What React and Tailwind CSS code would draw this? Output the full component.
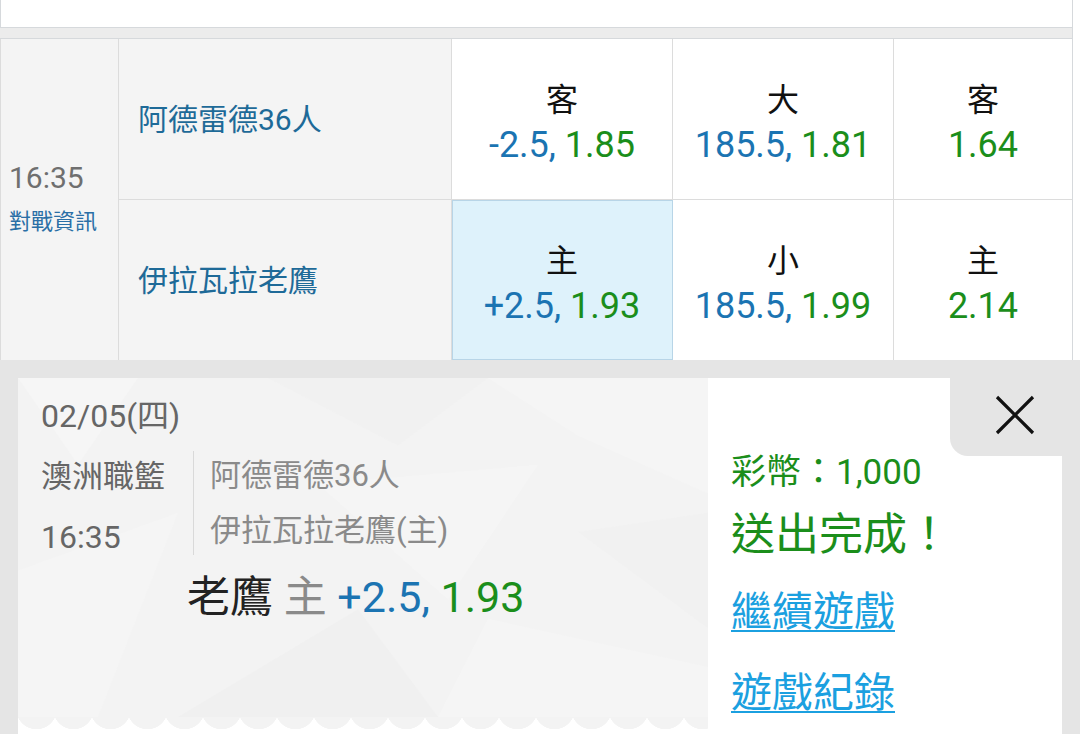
import React from "react";

const FONT = { fontFamily: "Roboto, 'Noto Sans CJK TC', 'Noto Sans', sans-serif" };

// one odds cell: label on top, line + price below
const OddsCell = ({ label, line, price, selected, last }) => (
  <div
    className={
      "flex flex-col items-center justify-center pt-[8px] border-[#dcdcdc] " +
      (last ? "" : "border-r ") +
      (selected ? "bg-[#def2fb] outline outline-1 outline-[#b8d5e7] -outline-offset-1" : "bg-white")
    }
  >
    <div className="text-[32px] leading-[44px] text-[#111]">{label}</div>
    <div className="text-[36px] leading-[46px] whitespace-nowrap">
      {line && <span className="text-[#1b74b2]">{line}, </span>}
      <span className="text-[#1b8e1b]">{price}</span>
    </div>
  </div>
);

const PolyBackground = () => (
  <svg className="absolute inset-0 w-full h-full" viewBox="0 0 690 352" preserveAspectRatio="none">
    <rect width="690" height="352" fill="#f3f3f3" />
    <polygon points="0,0 120,0 60,90" fill="#f6f6f6" />
    <polygon points="250,0 470,0 380,70" fill="#f0f0f0" opacity="0.6" />
    <polygon points="470,0 690,0 690,120 560,60" fill="#f5f5f5" />
    <polygon points="0,200 160,140 80,352 0,352" fill="#f5f5f5" />
    <polygon points="160,352 340,240 420,352" fill="#efefef" opacity="0.6" />
    <polygon points="420,352 470,250 690,300 690,352" fill="#f5f5f5" />
    <polygon points="300,110 520,90 430,230" fill="#f5f5f5" />
    <polygon points="560,160 690,140 690,260" fill="#f0f0f0" opacity="0.6" />
  </svg>
);

export default function App() {
  return (
    <div className="w-[1080px] h-[734px] overflow-hidden bg-white" style={FONT}>
      {/* top remnant of previous block */}
      <div className="w-[1073px] h-[28px] bg-white border-l border-r border-b border-[#d6d9dc]" />
      <div className="w-[1073px] h-[10px] bg-[#ececec] border-r border-[#d6d9dc]" />

      {/* match row */}
      <div className="w-[1073px] h-[322px] flex border-t border-r border-[#d6d9dc]">
        <div className="w-[119px] shrink-0 bg-[#f4f4f4] border-l border-r border-[#dcdcdc] flex flex-col justify-center pl-[8px] pb-[4px]">
          <div className="text-[30px] leading-[40px] text-[#6f6f6f]">16:35</div>
          <div className="mt-[8px] text-[22px] leading-[32px] text-[#2a6fa6]">對戰資訊</div>
        </div>
        <div className="w-[333px] shrink-0 bg-[#f4f4f4] border-r border-[#dcdcdc] grid grid-rows-2">
          <div className="flex items-center pl-[19px] pt-[2px] border-b border-[#dcdcdc] text-[30px] text-[#1e6a98]">
            阿德雷德36人
          </div>
          <div className="flex items-center pl-[19px] pt-[2px] text-[30px] text-[#1e6a98]">伊拉瓦拉老鷹</div>
        </div>
        <div className="flex-1 grid grid-cols-[221px_221px_1fr] grid-rows-2">
          <div className="border-b border-[#dcdcdc] grid"><OddsCell label="客" line="-2.5" price="1.85" /></div>
          <div className="border-b border-[#dcdcdc] grid"><OddsCell label="大" line="185.5" price="1.81" /></div>
          <div className="border-b border-[#dcdcdc] grid"><OddsCell label="客" price="1.64" last /></div>
          <div className="grid"><OddsCell label="主" line="+2.5" price="1.93" selected /></div>
          <div className="grid"><OddsCell label="小" line="185.5" price="1.99" /></div>
          <div className="grid"><OddsCell label="主" price="2.14" last /></div>
        </div>
      </div>

      {/* confirmation panel */}
      <div className="h-[374px] bg-[#e5e5e5] pt-[18px] px-[18px]">
        <div className="h-full flex bg-white">
          {/* ticket */}
          <div className="w-[690px] shrink-0 flex flex-col">
            <div className="relative h-[339px] overflow-hidden">
              <PolyBackground />
              <div className="relative pl-[23px] pt-[17px]">
                <div className="text-[32px] leading-[42px] text-[#666]">02/05(四)</div>
                <div className="mt-[9px] flex">
                  <div className="w-[152px] text-[31px] leading-[61px] text-[#666]">
                    <div>澳洲職籃</div>
                    <div className="text-[32px]">16:35</div>
                  </div>
                  <div className="mt-[5px] w-px h-[104px] bg-[#d9d9d9]" />
                  <div className="pl-[16px] pt-[2px] text-[31px] leading-[55px] text-[#8a8a8a]">
                    <div>阿德雷德36人</div>
                    <div>伊拉瓦拉老鷹(主)</div>
                  </div>
                </div>
                <div className="mt-[5px] ml-[146px] text-[43px] leading-[48px] whitespace-nowrap">
                  <span className="text-[#222]">老鷹</span>
                  <span className="text-[#8a8a8a]"> 主 </span>
                  <span className="text-[#1b74b2]">+2.5, </span>
                  <span className="text-[#1b8e1b]">1.93</span>
                </div>
              </div>
            </div>
            <div className="h-[13px] bg-[radial-gradient(circle_at_50%_-8px,#f3f3f3_20px,transparent_20.5px)] bg-[length:37px_13px] bg-repeat-x" />
          </div>

          {/* result */}
          <div className="relative flex-1 pl-[23px] pt-[73px]">
            <button className="absolute top-0 right-0 w-[112px] h-[78px] bg-[#e5e5e5] rounded-bl-[18px] flex items-center justify-center pl-[18px] pb-[5px]">
              <svg width="40" height="40" viewBox="0 0 40 40">
                <path d="M2 2 L38 38 M38 2 L2 38" stroke="#111" strokeWidth="3.2" fill="none" />
              </svg>
            </button>
            <div className="text-[35px] leading-[44px] text-[#1b8e1b]">彩幣：1,000</div>
            <div className="mt-[12px] text-[44px] leading-[56px] text-[#1b8e1b]">送出完成！</div>
            <div className="mt-[23px] text-[41px] leading-[52px] text-[#1ba0e0] underline decoration-2 underline-offset-[4px]">
              繼續遊戲
            </div>
            <div className="mt-[29px] text-[41px] leading-[52px] text-[#1ba0e0] underline decoration-2 underline-offset-[4px]">
              遊戲紀錄
            </div>
          </div>
        </div>
      </div>
    </div>
  );
}
